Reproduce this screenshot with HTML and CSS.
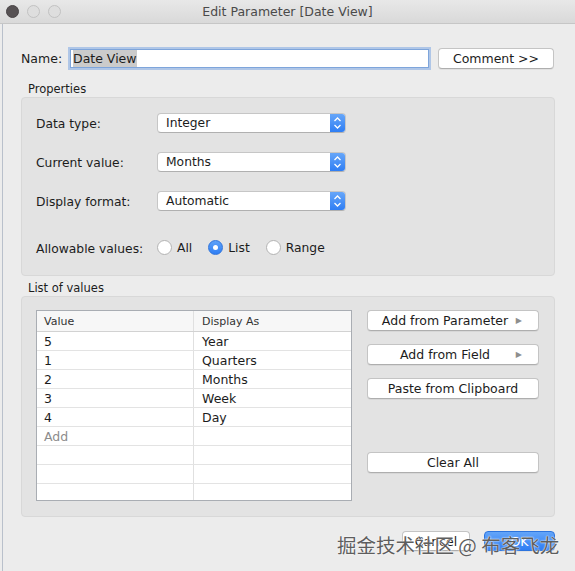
FILE: index.html
```html
<!DOCTYPE html>
<html lang="en">
  <head>
    <meta charset="UTF-8" />
    <title>Edit Parameter [Date View]</title>
    <link rel="stylesheet" href="styles.css">
  </head>
  <body>
    <div class="window">
      <!-- Title bar -->
      <div class="titlebar">
        <div class="lights">
          <span class="light close"></span>
          <span class="light"></span>
          <span class="light"></span>
        </div>
        <div class="title">Edit Parameter [Date View]</div>
        <div></div>
      </div>

      <div class="content">
        <!-- Name -->
        <div class="name-row">
          <span class="name-label">Name:</span>
          <div class="name-input"><span class="selected">Date View</span></div>
          <button class="btn comment-btn">Comment &gt;&gt;</button>
        </div>

        <!-- Properties -->
        <div class="section-label">Properties</div>
        <div class="group props">
          <div class="prop-row">
            <span class="prop-label">Data type:</span>
            <div class="select">
              <span class="select-value">Integer</span>
              <span class="stepper">
                <svg width="9" height="14" viewBox="0 0 9 14"><path d="M1.5 5 L4.5 2 L7.5 5 M1.5 9 L4.5 12 L7.5 9" fill="none" stroke="#fff" stroke-width="1.3"/></svg>
              </span>
            </div>
          </div>
          <div class="prop-row">
            <span class="prop-label">Current value:</span>
            <div class="select">
              <span class="select-value">Months</span>
              <span class="stepper">
                <svg width="9" height="14" viewBox="0 0 9 14"><path d="M1.5 5 L4.5 2 L7.5 5 M1.5 9 L4.5 12 L7.5 9" fill="none" stroke="#fff" stroke-width="1.3"/></svg>
              </span>
            </div>
          </div>
          <div class="prop-row">
            <span class="prop-label">Display format:</span>
            <div class="select">
              <span class="select-value">Automatic</span>
              <span class="stepper">
                <svg width="9" height="14" viewBox="0 0 9 14"><path d="M1.5 5 L4.5 2 L7.5 5 M1.5 9 L4.5 12 L7.5 9" fill="none" stroke="#fff" stroke-width="1.3"/></svg>
              </span>
            </div>
          </div>
          <div class="prop-row radio-row">
            <span class="prop-label">Allowable values:</span>
            <span class="radio"></span><span class="radio-text">All</span>
            <span class="radio checked"></span><span class="radio-text">List</span>
            <span class="radio"></span><span class="radio-text">Range</span>
          </div>
        </div>

        <!-- List of values -->
        <div class="section-label list-label">List of values</div>
        <div class="group list">
          <div class="table">
            <div class="tr thead">
              <div class="td">Value</div>
              <div class="td">Display As</div>
            </div>
            <div class="tr"><div class="td">5</div><div class="td">Year</div></div>
            <div class="tr"><div class="td">1</div><div class="td">Quarters</div></div>
            <div class="tr"><div class="td">2</div><div class="td">Months</div></div>
            <div class="tr"><div class="td">3</div><div class="td">Week</div></div>
            <div class="tr"><div class="td">4</div><div class="td">Day</div></div>
            <div class="tr"><div class="td add">Add</div><div class="td"></div></div>
            <div class="tr"><div class="td"></div><div class="td"></div></div>
            <div class="tr"><div class="td"></div><div class="td"></div></div>
            <div class="tr"><div class="td"></div><div class="td"></div></div>
          </div>

          <div class="side-buttons">
            <button class="btn side-btn menu-btn">Add from Parameter<span class="arrow">&#9654;</span></button>
            <button class="btn side-btn menu-btn">Add from Field<span class="arrow">&#9654;</span></button>
            <button class="btn side-btn">Paste from Clipboard</button>
            <button class="btn side-btn clear-btn">Clear All</button>
          </div>
        </div>

        <!-- Footer -->
        <div class="footer">
          <button class="btn cancel-btn">Cancel</button>
          <button class="btn ok-btn">OK</button>
        </div>
      </div>

      <div class="watermark">掘金技术社区 @ 布客飞龙</div>
    </div>
  </body>
</html>
```

FILE: styles.css
```css
body {
  margin: 0;
  font-family: "DejaVu Sans", sans-serif;
  font-size: 12px;
  color: #1c1c1c;
}

.window {
  position: relative;
  width: 575px;
  height: 571px;
  background: #ececec;
  overflow: hidden;
}

/* Title bar */
.titlebar {
  height: 23px;
  display: grid;
  grid-template-columns: 1fr auto 1fr;
  align-items: center;
  background: linear-gradient(#e8e8e8, #d9d9d9);
  border-bottom: 1px solid #c6c6c6;
}

.lights {
  display: flex;
  gap: 8px;
  padding-left: 6px;
}

.light {
  width: 11px;
  height: 11px;
  border-radius: 50%;
  background: #dedede;
  border: 1px solid #c2c2c2;
}

.light.close {
  background: #575254;
  border-color: #4a4547;
}

.title {
  font-size: 12.5px;
  color: #4a4a4a;
}

/* Content */
.content {
  padding: 23px 20px 0 21px;
  height: 547px;
  box-sizing: border-box;
  box-shadow: inset 2px 0 0 #ececec, inset 3px 0 0 #b9c0cb;
}

.name-row {
  display: flex;
  align-items: center;
  height: 23px;
}

.name-label {
  width: 49px;
  font-size: 12.5px;
}

.name-input {
  width: 359px;
  height: 19px;
  box-sizing: border-box;
  background: #fff;
  border: 1px solid #7ea5db;
  box-shadow: 0 0 0 2px rgba(125, 168, 228, 0.55);
  display: flex;
  align-items: center;
  padding-left: 2px;
  font-size: 12.5px;
}

.selected {
  background: #cbcbcb;
  padding: 1px 0;
}

.btn {
  font-family: "DejaVu Sans", sans-serif;
  font-size: 12.5px;
  color: #1c1c1c;
  background: #fff;
  border: 1px solid #c4c4c4;
  border-bottom-color: #aeaeae;
  border-radius: 4px;
  box-shadow: 0 1px 0 rgba(0, 0, 0, 0.05);
  padding: 0;
  height: 21px;
}

.comment-btn {
  margin-left: 9px;
  width: 116px;
}

.section-label {
  margin-top: 11px;
  height: 16px;
  line-height: 16px;
  padding-left: 7px;
  font-size: 11.5px;
}

.section-label.list-label {
  margin-top: 4px;
}

.group {
  background: #e3e3e3;
  border: 1px solid #d8d8d8;
  border-radius: 4px;
  box-sizing: border-box;
}

/* Properties */
.props {
  height: 179px;
  padding: 15px 0 0 14px;
}

.prop-row {
  display: flex;
  align-items: center;
  height: 20px;
  font-size: 12.3px;
}

.prop-label {
  padding-top: 2px;
}

.prop-row + .prop-row {
  margin-top: 19px;
}

.prop-row.radio-row {
  margin-top: 28px;
  height: 17px;
}

.prop-label {
  width: 121px;
}

.select {
  width: 189px;
  height: 20px;
  box-sizing: border-box;
  display: flex;
  background: #fff;
  border: 1px solid #c6c6c6;
  border-bottom-color: #b0b0b0;
  border-radius: 4px;
  overflow: hidden;
}

.select-value {
  flex: 1;
  padding-left: 8px;
  line-height: 18px;
}

.stepper {
  width: 15px;
  display: flex;
  align-items: center;
  justify-content: center;
  background: linear-gradient(#66a6f9, #2f7ef4);
}

.radio {
  width: 15px;
  height: 15px;
  box-sizing: border-box;
  border-radius: 50%;
  background: #fff;
  border: 1px solid #b3b3b3;
  position: relative;
}

.radio.checked {
  background: linear-gradient(#5ea2f8, #2f7ef4);
  border-color: #2f74dc;
}

.radio.checked::after {
  content: "";
  position: absolute;
  left: 4px;
  top: 4px;
  width: 5px;
  height: 5px;
  border-radius: 50%;
  background: #fff;
}

.radio-text {
  margin-left: 5px;
  margin-right: 16px;
}

/* List of values */
.list {
  height: 221px;
  display: flex;
  padding: 13px 15px 0 14px;
}

.table {
  width: 316px;
  height: 191px;
  box-sizing: border-box;
  background: #fff;
  border: 1px solid #a9adb3;
  overflow: hidden;
}

.tr {
  display: flex;
  height: 18px;
  border-bottom: 1px solid #e3e3e3;
}

.tr.thead {
  height: 20px;
  border-bottom: 1px solid #d2d2d2;
  background: #f7f7f7;
  color: #333;
}

.td {
  display: flex;
  align-items: center;
  font-size: 12.5px;
}

.thead .td {
  font-size: 11px;
}

.td:first-child {
  width: 157px;
  padding-left: 7px;
  box-sizing: border-box;
  border-right: 1px solid #e0e0e0;
}

.td:last-child {
  flex: 1;
  padding-left: 8px;
}

.td.add {
  color: #8c8c8c;
}

.side-buttons {
  margin-left: 15px;
  width: 172px;
  display: flex;
  flex-direction: column;
}

.side-btn {
  height: 21px;
  width: 172px;
}

.side-btn + .side-btn {
  margin-top: 13px;
}

.side-btn.clear-btn {
  margin-top: 53px;
}

.menu-btn {
  position: relative;
  padding-right: 16px;
}

.menu-btn .arrow {
  position: absolute;
  right: 16px;
  top: 5px;
  font-size: 8px;
  color: #8e8e8e;
}

/* Footer */
.footer {
  display: flex;
  justify-content: flex-end;
  margin-top: 14px;
}

.footer .btn {
  height: 20px;
}

.cancel-btn {
  width: 68px;
}

.ok-btn {
  width: 71px;
  margin-left: 14px;
  color: #fff;
  background: linear-gradient(#63a5f9, #2e7df4);
  border-color: #2c74de;
}

/* Watermark over the footer */
.watermark {
  position: absolute;
  left: 337px;
  top: 530px;
  font-family: "Noto Sans CJK SC", sans-serif;
  font-size: 19.5px;
  color: #5e5e5e;
  text-shadow: 0 0 2px #fff, 0 0 1px #fff;
  white-space: nowrap;
}
```
